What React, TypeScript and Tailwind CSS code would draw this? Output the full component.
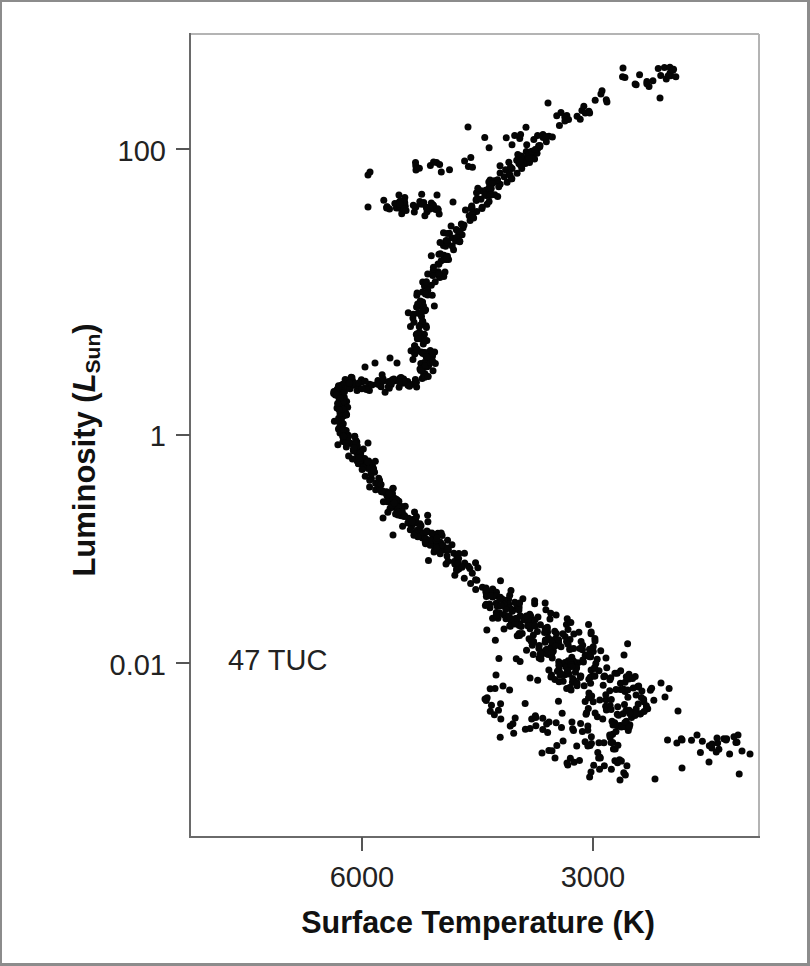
import { useMemo, type FC } from "react";

type Pt = [number, number];

type Branch = {
  path: Pt[];
  n: number;
  s0: number;
  s1: number;
};

// seeded rng so the dots stay put between renders
const mulberry32 = (a: number) => () => {
  a |= 0;
  a = (a + 0x6d2b79f5) | 0;
  let t = Math.imul(a ^ (a >>> 15), 1 | a);
  t = (t + Math.imul(t ^ (t >>> 7), 61 | t)) ^ t;
  return ((t ^ (t >>> 14)) >>> 0) / 4294967296;
};

const branches: Branch[] = [
  // turnoff + upper main sequence
  {
    path: [
      [343, 382], [340, 400], [341, 420], [345, 436], [355, 452], [370, 470],
      [385, 490], [400, 510], [420, 530], [440, 548], [460, 565], [480, 583],
      [500, 600],
    ],
    n: 300,
    s0: 3.5,
    s1: 6.5,
  },
  // lower main sequence
  {
    path: [
      [500, 600], [520, 618], [540, 636], [560, 655], [580, 672], [600, 690],
      [620, 708], [640, 725],
    ],
    n: 330,
    s0: 9,
    s1: 30,
  },
  // scatter below the lower main sequence
  {
    path: [[485, 695], [530, 722], [580, 745], [630, 765]],
    n: 60,
    s0: 13,
    s1: 13,
  },
  // faint tail to the right
  {
    path: [[660, 746], [700, 745], [720, 740], [750, 752]],
    n: 20,
    s0: 7,
    s1: 7,
  },
  // subgiant branch
  {
    path: [[345, 385], [380, 384], [425, 382]],
    n: 60,
    s0: 4,
    s1: 4,
  },
  // red giant branch
  {
    path: [
      [428, 380], [424, 360], [418, 340], [417, 320], [422, 300], [432, 285],
      [440, 268], [445, 250], [455, 235], [468, 215], [485, 197], [500, 182],
      [515, 167], [530, 152],
    ],
    n: 210,
    s0: 5,
    s1: 5,
  },
  {
    path: [
      [530, 152], [545, 135], [555, 122], [575, 112], [600, 100], [625, 90],
      [650, 82], [675, 72],
    ],
    n: 55,
    s0: 5,
    s1: 5,
  },
  // horizontal branch clump
  {
    path: [[385, 208], [400, 204], [420, 205], [437, 206]],
    n: 50,
    s0: 4,
    s1: 4,
  },
  // asymptotic giant branch
  {
    path: [
      [405, 162], [430, 165], [450, 168], [475, 162], [485, 148], [510, 140],
      [525, 128],
    ],
    n: 22,
    s0: 4,
    s1: 4,
  },
];

const strays: Pt[] = [
  [368, 175], [370, 172], [368, 207], [453, 202], [437, 195], [468, 127],
  [548, 103], [623, 68], [660, 98], [365, 367], [375, 363], [390, 358],
  [397, 363], [427, 357], [433, 353], [383, 518], [393, 535], [448, 548],
  [368, 443], [595, 641], [624, 655], [661, 683], [665, 697], [678, 711],
  [485, 699], [496, 675], [503, 686], [542, 753], [555, 758], [567, 763],
  [591, 772], [620, 780], [655, 779], [682, 768], [709, 762], [738, 735],
  [742, 751], [750, 754], [697, 735], [712, 744], [717, 738],
];

const makeStars = (): Pt[] => {
  const rand = mulberry32(47);
  const gauss = () => {
    const u = Math.max(rand(), 1e-9);
    const v = rand();
    return Math.sqrt(-2 * Math.log(u)) * Math.cos(2 * Math.PI * v);
  };
  const out: Pt[] = [];
  branches.forEach(({ path, n, s0, s1 }) => {
    const lens = [0];
    for (let i = 1; i < path.length; i++) {
      const dx = path[i][0] - path[i - 1][0];
      const dy = path[i][1] - path[i - 1][1];
      lens.push(lens[i - 1] + Math.hypot(dx, dy));
    }
    const total = lens[lens.length - 1];
    for (let k = 0; k < n; k++) {
      const u = rand();
      const d = u * total;
      let i = 1;
      while (i < lens.length - 1 && lens[i] < d) i++;
      const [ax, ay] = path[i - 1];
      const [bx, by] = path[i];
      const seg = lens[i] - lens[i - 1] || 1;
      const f = (d - lens[i - 1]) / seg;
      const tx = (bx - ax) / seg;
      const ty = (by - ay) / seg;
      const off = gauss() * (s0 + (s1 - s0) * u);
      const jit = gauss() * 1.5;
      out.push([
        ax + (bx - ax) * f - ty * off + tx * jit,
        ay + (by - ay) * f + tx * off + ty * jit,
      ]);
    }
  });
  // keep everything inside the frame
  return out
    .concat(strays)
    .filter(([x, y]) => x > 195 && x < 754 && y > 40 && y < 832);
};

const yTicks = [
  { y: 149, label: "100", base: 161 },
  { y: 435, label: "1", base: 446 },
  { y: 663, label: "0.01", base: 675 },
];

const xTicks = [
  { x: 362, label: "6000" },
  { x: 593, label: "3000" },
];

const Diagram: FC = () => {
  const stars = useMemo(makeStars, []);

  return (
    <svg
      className="block h-[880px] w-[668px]"
      viewBox="102 20 668 880"
      xmlns="http://www.w3.org/2000/svg"
    >
      {/* frame */}
      <line x1={190} y1={34} x2={759} y2={34} stroke="#b4b4b4" strokeWidth={2} />
      <line x1={759} y1={34} x2={759} y2={837} stroke="#b4b4b4" strokeWidth={2} />
      <line x1={190} y1={33} x2={190} y2={838} stroke="#6a6a6a" strokeWidth={2} />
      <line x1={190} y1={837} x2={760} y2={837} stroke="#6a6a6a" strokeWidth={2} />

      {yTicks.map(({ y, label, base }) => (
        <g key={label}>
          <line x1={176} y1={y} x2={190} y2={y} stroke="#555" strokeWidth={2} />
          <text x={166} y={base} textAnchor="end" fontSize={29} fill="#222">
            {label}
          </text>
        </g>
      ))}

      {xTicks.map(({ x, label }) => (
        <g key={label}>
          <line x1={x} y1={837} x2={x} y2={851} stroke="#555" strokeWidth={2} />
          <text x={x} y={887} textAnchor="middle" fontSize={29} fill="#222">
            {label}
          </text>
        </g>
      ))}

      <text x={228} y={670} fontSize={29} fill="#222">
        47 TUC
      </text>

      <g fill="#050505">
        {stars.map(([cx, cy], i) => (
          <circle key={i} cx={cx} cy={cy} r={3.5} />
        ))}
      </g>
    </svg>
  );
};

const App: FC = () => {
  return (
    <div className="h-[966px] w-[810px] overflow-hidden border-t-2 border-l-2 border-r-[3px] border-b-[3px] border-[#8c8c8c] bg-white pt-[18px] font-['Liberation_Sans',Arial,sans-serif] text-[#111]">
      <div className="flex">
        <div className="flex h-[880px] w-[100px] shrink-0 items-center justify-center pb-[20px] pl-[66px]">
          <span className="shrink-0 -rotate-90 text-[31px] leading-[34px] font-bold whitespace-nowrap">
            Luminosity (<i>L</i>
            <sub className="text-[21px]">Sun</sub>)
          </span>
        </div>
        <Diagram />
      </div>
      <div className="mt-[5px] ml-[188px] w-[576px] text-center text-[30.5px] leading-[34px] font-bold">
        Surface Temperature (K)
      </div>
    </div>
  );
};

export default App;
